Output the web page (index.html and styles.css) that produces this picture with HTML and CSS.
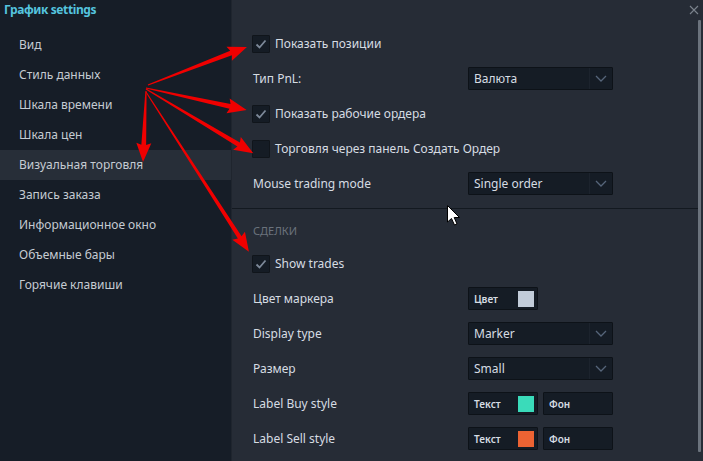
FILE: index.html
```html
<!DOCTYPE html>
<html lang="ru">
<head>
<meta charset="utf-8">
<title>График settings</title>
<link rel="stylesheet" href="styles.css">
</head>
<body>
<div class="app">
  <aside class="sidebar">
    <div class="title">График settings</div>
    <ul class="menu">
      <li class="item">Вид</li>
      <li class="item">Стиль данных</li>
      <li class="item">Шкала времени</li>
      <li class="item">Шкала цен</li>
      <li class="item active">Визуальная торговля</li>
      <li class="item">Запись заказа</li>
      <li class="item">Информационное окно</li>
      <li class="item">Объемные бары</li>
      <li class="item">Горячие клавиши</li>
    </ul>
  </aside>
  <main class="panel">
    <div class="close">
      <svg width="10" height="10" viewBox="0 0 10 10"><path d="M1 1L9 9M9 1L1 9" stroke="#7b838d" stroke-width="1.1"/></svg>
    </div>
    <div class="scrollbar"></div>
    <section class="section first">
      <div class="row">
        <span class="checkbox checked"><svg width="18" height="18" viewBox="0 0 18 18"><path d="M4.5 9.5L7.5 12.5L13.5 5.5" fill="none" stroke="#7d8999" stroke-width="1.8"/></svg></span>
        <span class="cb-label">Показать позиции</span>
      </div>
      <div class="row">
        <span class="label">Тип PnL:</span>
        <div class="select"><span class="select-text">Валюта</span><span class="select-arrow"><svg width="12" height="7" viewBox="0 0 12 7"><path d="M1 1L6 6L11 1" fill="none" stroke="#56657a" stroke-width="1.3"/></svg></span></div>
      </div>
      <div class="row">
        <span class="checkbox checked"><svg width="18" height="18" viewBox="0 0 18 18"><path d="M4.5 9.5L7.5 12.5L13.5 5.5" fill="none" stroke="#7d8999" stroke-width="1.8"/></svg></span>
        <span class="cb-label">Показать рабочие ордера</span>
      </div>
      <div class="row">
        <span class="checkbox"></span>
        <span class="cb-label">Торговля через панель Создать Ордер</span>
      </div>
      <div class="row">
        <span class="label">Mouse trading mode</span>
        <div class="select"><span class="select-text">Single order</span><span class="select-arrow"><svg width="12" height="7" viewBox="0 0 12 7"><path d="M1 1L6 6L11 1" fill="none" stroke="#56657a" stroke-width="1.3"/></svg></span></div>
      </div>
    </section>
    <div class="divider"></div>
    <section class="section">
      <div class="section-head">СДЕЛКИ</div>
      <div class="row">
        <span class="checkbox checked"><svg width="18" height="18" viewBox="0 0 18 18"><path d="M4.5 9.5L7.5 12.5L13.5 5.5" fill="none" stroke="#7d8999" stroke-width="1.8"/></svg></span>
        <span class="cb-label">Show trades</span>
      </div>
      <div class="row">
        <span class="label">Цвет маркера</span>
        <div class="color-btn"><span class="btn-text">Цвет</span><span class="swatch swatch-grey"></span></div>
      </div>
      <div class="row">
        <span class="label">Display type</span>
        <div class="select"><span class="select-text">Marker</span><span class="select-arrow"><svg width="12" height="7" viewBox="0 0 12 7"><path d="M1 1L6 6L11 1" fill="none" stroke="#56657a" stroke-width="1.3"/></svg></span></div>
      </div>
      <div class="row">
        <span class="label">Размер</span>
        <div class="select"><span class="select-text">Small</span><span class="select-arrow"><svg width="12" height="7" viewBox="0 0 12 7"><path d="M1 1L6 6L11 1" fill="none" stroke="#56657a" stroke-width="1.3"/></svg></span></div>
      </div>
      <div class="row">
        <span class="label">Label Buy style</span>
        <div class="btn-pair">
          <div class="color-btn"><span class="btn-text">Текст</span><span class="swatch swatch-teal"></span></div>
          <div class="color-btn"><span class="btn-text">Фон</span></div>
        </div>
      </div>
      <div class="row">
        <span class="label">Label Sell style</span>
        <div class="btn-pair">
          <div class="color-btn"><span class="btn-text">Текст</span><span class="swatch swatch-orange"></span></div>
          <div class="color-btn"><span class="btn-text">Фон</span></div>
        </div>
      </div>
    </section>
  </main>
</div>
<svg class="annotations" width="703" height="461" viewBox="0 0 703 461">
  <g fill="#f00000">
    <g transform="translate(148 85) rotate(-21)"><polygon points="0,-0.6 89,-2.4 87,-7.5 106,0 87,7.5 89,2.4 0,0.6"/></g>
    <g transform="translate(146 88) rotate(12.3)"><polygon points="0,-0.6 86,-2.4 84,-7.5 103,0 84,7.5 86,2.4 0,0.6"/></g>
    <g transform="translate(146 89) rotate(30.9)"><polygon points="0,-0.6 108,-2.4 106,-7.5 125,0 106,7.5 108,2.4 0,0.6"/></g>
    <g transform="translate(146 91) rotate(92.4)"><polygon points="0,-0.6 54,-2.4 52,-7.5 71,0 52,7.5 54,2.4 0,0.6"/></g>
    <g transform="translate(146 92) rotate(57.2)"><polygon points="0,-0.5 173,-2.2 171,-7.5 190,0 171,7.5 173,2.2 0,0.5"/></g>
  </g>
  <path d="M447.5 205.5 L447.5 222 L451.5 218.5 L454.5 225 L457 224 L454.2 217.5 L459.5 217.5 Z" fill="#ffffff" stroke="#000000" stroke-width="1"/>
</svg>
</body>
</html>
```
FILE: styles.css
```css
* { box-sizing: border-box; }
html, body {
  margin: 0;
  padding: 0;
  width: 703px;
  height: 461px;
  overflow: hidden;
  background: #262c36;
  font-family: "Noto Sans", "Open Sans", sans-serif;
}
.app {
  display: flex;
  width: 703px;
  height: 461px;
}
.sidebar {
  width: 231px;
  flex: none;
  background: #161d27;
}
.title {
  height: 20px;
  line-height: 20px;
  padding-left: 4px;
  font-size: 12px;
  font-weight: 700;
  letter-spacing: -0.4px;
  color: #55c4df;
}
.menu {
  list-style: none;
  margin: 10px 0 0 0;
  padding: 0;
}
.item {
  height: 30px;
  line-height: 30px;
  padding-left: 19px;
  font-size: 12px;
  color: #c5cbd2;
}
.item.active {
  background: #272e38;
}
.panel {
  flex: 1;
  position: relative;
  background: #262c36;
  border-left: 1px solid #1f252e;
}
.close {
  position: absolute;
  top: 5px;
  right: 4px;
  width: 10px;
  height: 10px;
  display: flex;
}
.scrollbar {
  position: absolute;
  top: 20px;
  right: 2px;
  width: 3px;
  height: 432px;
  background: #6b737d;
  border-radius: 1px;
}
.section {
  padding-left: 20px;
}
.section.first {
  padding-top: 26px;
}
.row {
  height: 35px;
  display: flex;
  align-items: center;
}
.label {
  width: 216px;
  flex: none;
  font-size: 12px;
  color: #d6dce3;
}
.label, .cb-label {
  padding-left: 1px;
}
.checkbox {
  width: 18px;
  height: 18px;
  flex: none;
  background: #151c25;
  border: 1px solid #10151b;
  border-radius: 1px;
  display: flex;
  align-items: center;
  justify-content: center;
}
.checkbox svg { display: block; margin: -1px; }
.cb-label {
  margin-left: 4px;
  font-size: 12px;
  color: #d6dce3;
}
.select {
  width: 145px;
  height: 23px;
  display: flex;
  align-items: center;
  background: #151c25;
  border: 1px solid #0d1218;
  border-radius: 1px;
}
.select-text {
  flex: 1;
  padding-left: 5px;
  font-size: 12px;
  color: #d6dce3;
}
.select-arrow {
  width: 23px;
  height: 21px;
  border-left: 1px solid #1c232d;
  display: flex;
  align-items: center;
  justify-content: center;
}
.select-arrow svg { display: block; }
.divider {
  margin-top: 7px;
  height: 1px;
  margin-right: 5px;
  background: #131920;
}
.section-head {
  padding-top: 15px;
  padding-bottom: 8px;
  padding-left: 1px;
  line-height: 14px;
  font-size: 11px;
  color: #6a727c;
}
.btn-pair {
  display: flex;
  gap: 5px;
}
.color-btn {
  width: 70px;
  height: 23px;
  display: flex;
  align-items: center;
  justify-content: space-between;
  padding: 0 3px 0 5px;
  background: #151c25;
  border: 1px solid #0d1218;
  border-radius: 1px;
}
.btn-text {
  font-size: 10px;
  font-weight: 600;
  color: #d6dce3;
}
.swatch {
  width: 16px;
  height: 16px;
  flex: none;
}
.swatch-grey { background: #c2ccd9; }
.swatch-teal { background: #3adbba; }
.swatch-orange { background: #ec6333; }
.annotations {
  position: absolute;
  left: 0;
  top: 0;
  pointer-events: none;
}
```
